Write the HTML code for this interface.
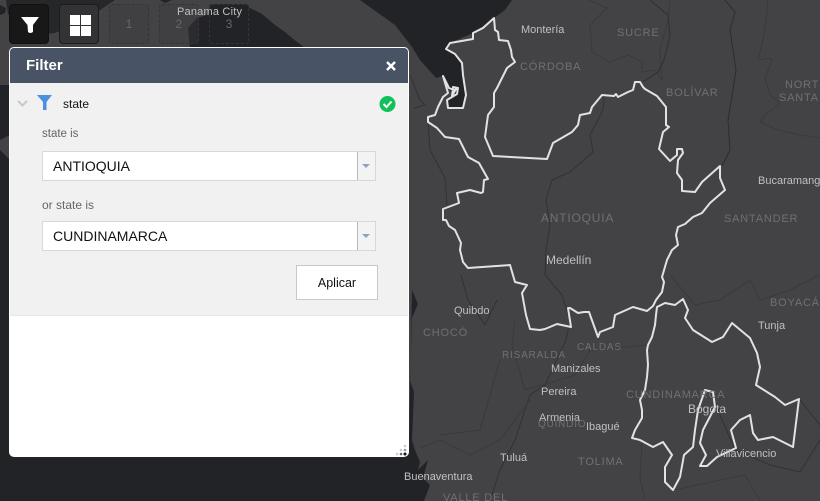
<!DOCTYPE html>
<html><head><meta charset="utf-8"><style>
html,body{margin:0;padding:0;background:#222327}
#r{position:relative;width:820px;height:501px;overflow:hidden;font-family:"Liberation Sans",sans-serif;background:#434345}
svg.m{position:absolute;left:0;top:0}
.b{position:absolute;top:4px;width:40px;height:40px;border-radius:4px;box-sizing:border-box}
.d{position:absolute;top:4px;width:40px;height:40px;box-sizing:border-box;border:1px dashed #353537;border-radius:3px;color:#68686a;font-size:12px;text-align:center;line-height:38px;background:rgba(60,60,62,.35)}
#p{position:absolute;left:9px;top:47px;width:400px;height:410px;background:#fff;border-radius:5px;overflow:hidden;border:1px solid #fff;box-sizing:border-box}
#h{height:35px;background:#485465;color:#fff;font-size:15px;font-weight:bold;line-height:36px;padding-left:16px}
#g{height:232px;background:#f1f1f1;border-bottom:1px solid #e8e8e8;position:relative}
.t{position:absolute;font-size:11.5px;color:#666}
.s{position:absolute;left:32px;width:334px;height:30px;box-sizing:border-box;border:1px solid #d8d8d8;background:#fff;font-size:14px;color:#111;line-height:28px;padding-left:10px}
.s i{position:absolute;right:0;top:0;width:17px;height:28px;background:#f3f3f3;border-left:1px solid #b5b8c0}
.s i:after{content:"";position:absolute;left:4px;top:12px;border:4px solid transparent;border-top:4px solid #8fa3c0;border-bottom:0}
#lbl{position:absolute;left:0;top:0;z-index:5}
</style></head><body><div id="r">
<svg class="m" width="820" height="501" viewBox="0 0 820 501">
<g fill="#222327">
<path d="M6 0L8 14L30 36L55 33L85 20L100 10L115 0Z" fill="#262729"/>
<path d="M0 5L6 8L5 13L0 15Z"/>
<path d="M160 0L165 3L172 0Z"/>
<path d="M190 48L188 28L197 18L210 14L250 8L262 14L275 25L285 32L292 38L305 48Z"/>
<path d="M0 85L10 85L30 50L30 470L0 470Z"/>
<path d="M0 140L10 135L10 160L0 150Z" fill="#434345"/>
<path d="M360 0L512 0L505 10L494 18L473 33L450 43L446 49L455 54L462 63L463 75L466 95L463 108L448 108L447 100L452 95L443 76L436 78L420 60L412 47L395 25Z"/>
<path d="M0 440L409 440L412 290L418 304L412 318L410 380L414 392L412 440L415 450L420 462L418 470L428 460L423 478L430 485L424 501L0 501Z"/>
</g>
<g fill="none" stroke="#3a3a3c" stroke-width="1">
<path d="M589 0L607 8L590 25L592 52L610 62L628 55L642 62L642 72L655 70L662 80L660 50L668 20L670 0"/>
<path d="M650 0L668 15L670 35L664 60L658 72L643 82" stroke="#303032"/>
<path d="M725 0L735 12L730 30L733 50L736 70L733 90L728 120L730 150L722 166" stroke="#2d2d2f"/>
<path d="M768 0L765 30L758 60L770 58L772 60L765 78L770 95L780 103L765 115L760 122L778 130L800 135L820 138"/>
<path d="M604 97L603 110L590 135L593 152L570 172L552 180L546 200L550 225L546 250L545 275L562 295L570 320L566 340L545 385L530 395L515 440L500 470L490 501" stroke="#323234"/>
<path d="M410 75L420 100L425 105L414 108" stroke="#323234"/>
<path d="M428 122L430 150L445 178L447 205" stroke="#323234"/>
<path d="M461 275L468 300L485 325L497 300" stroke="#323234"/>
<path d="M515 320L512 345L525 390L575 375L590 350L650 345"/>
<path d="M440 435L480 430L500 360M420 448L440 440L470 455L500 440L530 400"/>
<path d="M645 498L640 480L642 440M675 490L720 480L745 475L760 501"/>
<path d="M720 415L735 450L770 465L800 472L820 440M800 400L820 425" stroke="#323234"/>
<path d="M670 275L695 305L720 300L750 280L760 300L790 290L820 275"/>
</g>
<g fill="none" stroke="#e2e2e2" stroke-width="2" stroke-linejoin="round">
<path d="M494 18L495 30L498 32L499 40L508 41L511 50L512 57L515 62L507 68L497 88L494 93L494 107L488 115L485 137L493 156L547 159L553 143L572 132L578 125L580 115L590 113L592 107L602 95L614 96L616 94L618 97L628 92L633 90L635 82L640 82L643 87L645 89L657 96L666 107L666 125L669 127L663 132L659 149L670 161L677 155L677 149L682 149L683 153L678 160L677 173L682 180L682 191L695 192L702 182L720 166L720 178L725 190L710 203L702 213L693 217L685 224L678 227L676 235L678 245L672 250L667 260L662 277L664 282L662 292L656 300L653 306L647 311L633 307L615 315L613 327L600 332L598 337L589 312L584 312L578 313L570 308L568 308L571 327L557 324L545 329L540 330L530 329L526 315L522 293L527 285L515 282L510 265L468 268L463 262L460 250L461 243L455 230L449 226L446 220L443 220L443 209L459 203L457 193L470 190L481 193L483 192L484 180L488 179L479 163L468 157L459 139L445 137L437 128L428 122L428 117L435 115L438 107L443 97L448 93L443 76L447 84L449 88L454 90L456 89L452 96L453 87L458 88L457 94L447 100L448 108L463 108L466 95L463 75L462 63L455 54L446 49L450 43L473 39L473 33L483 28Z"/>
<path d="M657 307L656 315L655 325L652 337L648 345L647 350L648 365L647 377L645 390L640 400L642 410L642 418L635 430L632 438L640 440L653 447L663 442L672 455L665 467L665 482L673 490L680 477L684 455L693 447L695 430L698 410L705 390L713 392L715 407L703 430L700 443L706 455L700 466L707 466L717 457L736 448L731 430L740 420L750 415L753 433L758 440L773 437L793 447L799 399L785 405L775 397L756 385L760 367L757 353L750 338L732 323L723 337L712 342L693 330L685 318L688 310L683 299L675 305L665 303Z"/>
</g>
<g font-family="'Liberation Sans',sans-serif" font-size="11">
<g fill="#c0c0c0">
<text x="521" y="33">Montería</text><text x="758" y="184">Bucaramanga</text><text x="546" y="264" font-size="12">Medellín</text><text x="454" y="314">Quibdo</text><text x="551" y="372">Manizales</text><text x="541" y="395">Pereira</text><text x="539" y="421">Armenia</text><text x="586" y="430">Ibagué</text><text x="758" y="329">Tunja</text><text x="688" y="413" font-size="12">Bogota</text><text x="716" y="457">Villavicencio</text><text x="500" y="461">Tuluá</text><text x="404" y="480">Buenaventura</text>
</g>
<g fill="#707072" letter-spacing=".8">
<text x="617" y="36">SUCRE</text><text x="520" y="70">CÓRDOBA</text><text x="666" y="96">BOLÍVAR</text><text x="785" y="88">NORTE</text><text x="779" y="101">SANTA</text><text x="541" y="222" font-size="12">ANTIOQUIA</text><text x="724" y="222">SANTANDER</text><text x="770" y="306">BOYACÁ</text><text x="423" y="336">CHOCÓ</text><text x="502" y="358" font-size="10">RISARALDA</text><text x="577" y="350" font-size="10">CALDAS</text><text x="626" y="398">CUNDINAMARCA</text><text x="538" y="427" font-size="10">QUINDIO</text><text x="578" y="465">TOLIMA</text><text x="443" y="501">VALLE DEL</text>
</g></g>
</svg>
<div class="b" style="left:9px;background:#181819;border:1px solid #111">
<svg width="38" height="38"><path d="M11 12H29L23 20V27Q20 29 18 27L17.5 20Z" fill="#fff"/></svg></div>
<div class="b" style="left:59px;background:#333335;border:1px solid #1c1c1e">
<svg width="38" height="38"><path d="M10 10h10v10h-10zM21 10h10v10h-10zM10 21h10v10h-10zM21 21h10v10h-10z" fill="#fff"/></svg></div>
<div class="d" style="left:109px">1</div><div class="d" style="left:159px">2</div><div class="d" style="left:209px;background:#222327">3</div>
<svg id="lbl" width="300" height="30"><text x="177" y="15" fill="#c0c0c0" font-family="'Liberation Sans',sans-serif" font-size="11" letter-spacing=".2">Panama City</text></svg>
<div id="p">
<div id="h">Filter<svg width="12" height="12" style="position:absolute;left:375px;top:12px"><path d="M2 2L10 10M10 2L2 10" stroke="#fff" stroke-width="2.4"/></svg></div>
<div id="g">
<svg width="14" height="10" style="position:absolute;left:6px;top:16px"><path d="M2 2L6.5 6.5L11 2" fill="none" stroke="#c8c8c8" stroke-width="2"/></svg>
<svg width="18" height="18" style="position:absolute;left:26px;top:11px"><path d="M1 1H16L10.5 8V16H7V8Z" fill="#4a90e2"/></svg>
<div class="t" style="left:53px;top:14px;color:#111;font-size:12px">state</div>
<svg width="18" height="18" style="position:absolute;left:369px;top:12px"><circle cx="8.5" cy="9" r="8" fill="#10c05a"/><path d="M4.5 9L7.5 12L12.5 6.5" fill="none" stroke="#fff" stroke-width="2"/></svg>
<div class="t" style="left:32px;top:45px">state is</div>
<div class="s" style="top:68px">ANTIOQUIA<i></i></div>
<div class="t" style="left:32px;top:115px;font-size:12px">or state is</div>
<div class="s" style="top:138px">CUNDINAMARCA<i></i></div>
<div style="position:absolute;left:286px;top:182px;width:82px;height:35px;box-sizing:border-box;border:1px solid #c8c8c8;background:#fff;font-size:12.5px;color:#111;text-align:center;line-height:34px">Aplicar</div>
</div>
<svg width="12" height="12" style="position:absolute;left:386px;top:396px"><g fill="#ccc"><circle cx="9" cy="2" r="1.3"/><circle cx="5" cy="6" r="1.3"/><circle cx="1" cy="10" r="1.3"/></g><circle cx="9" cy="6" r="1.3" fill="#999"/><circle cx="5" cy="10" r="1.3" fill="#666"/><circle cx="9" cy="10" r="1.5" fill="#111"/></svg>
</div>
</div></body></html>
